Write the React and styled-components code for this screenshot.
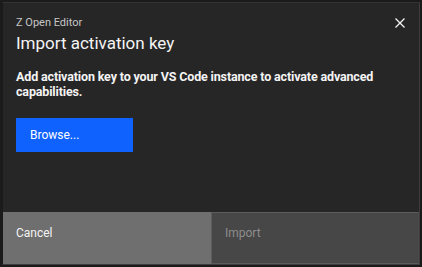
import React from 'react';
import styled, { createGlobalStyle } from 'styled-components';

const Global = createGlobalStyle`
  html, body {
    margin: 0;
    padding: 0;
    background: #1b1b1b;
  }
  body {
    font-family: Roboto, "Noto Sans", sans-serif;
  }
`

const Page = styled.div`
  width: 422px;
  height: 267px;
  padding: 2px 2px 2px 2px;
  box-sizing: border-box;
`

const Modal = styled.div`
  height: 263px;
  width: 418px;
  background: #262626;
  border: 1px solid #3d3d3d;
  border-left-color: #1a1a1a;
  border-top-color: #333;
  box-sizing: border-box;
  display: flex;
  flex-direction: column;
`

const Header = styled.div`
  position: relative;
  padding: 13px 16px 0 13px;
`

const Label = styled.div`
  font-size: 11px;
  color: #c6c6c6;
  line-height: 14px;
`

const Title = styled.h2`
  margin: 3px 0 0;
  font-size: 17px;
  font-weight: 400;
  color: #f4f4f4;
  line-height: 20px;
`

const Close = styled.button`
  position: absolute;
  top: 12px;
  right: 11px;
  background: none;
  border: 0;
  padding: 0;
  width: 16px;
  height: 16px;
  color: #f4f4f4;
  display: flex;
  align-items: center;
  justify-content: center;
`

const Body = styled.div`
  flex: 1;
  padding: 16px 16px 0 13px;
`

const Text = styled.p`
  margin: 0;
  font-size: 12.5px;
  font-weight: 700;
  line-height: 15px;
  letter-spacing: -0.15px;
  color: #f4f4f4;
  max-width: 388px;
`

const Browse = styled.button`
  margin-top: 19px;
  width: 117px;
  height: 34px;
  border: 0;
  background: #0f62fe;
  color: #ffffff;
  font-family: inherit;
  font-size: 12px;
  text-align: left;
  padding: 0 14px;
`

const Footer = styled.div`
  display: grid;
  grid-template-columns: 1fr 1fr;
  height: 52px;
`

const FooterButton = styled.button`
  font-family: inherit;
  font-size: 12px;
  text-align: left;
  padding: 0 13px 10px;
  border: 0;
  background: ${p => (p.$disabled ? '#474747' : '#6f6f6f')};
  color: ${p => (p.$disabled ? '#8d8d8d' : '#f4f4f4')};
  ${p => p.$disabled && 'border: 1px solid #5c5c5c; border-right-color: #4a4a4a;'}
`

export default function App() {
  return (
    <Page>
      <Global />
      <Modal>
        <Header>
          <Label>Z Open Editor</Label>
          <Title>Import activation key</Title>
          <Close aria-label="Close">
            <svg width="12" height="12" viewBox="0 0 12 12">
              <path d="M1.5 1.5 L10.5 10.5 M10.5 1.5 L1.5 10.5" stroke="currentColor" strokeWidth="1.3" />
            </svg>
          </Close>
        </Header>
        <Body>
          <Text>Add activation key to your VS Code instance to activate advanced capabilities.</Text>
          <Browse>Browse...</Browse>
        </Body>
        <Footer>
          <FooterButton>Cancel</FooterButton>
          <FooterButton $disabled>Import</FooterButton>
        </Footer>
      </Modal>
    </Page>
  );
}
